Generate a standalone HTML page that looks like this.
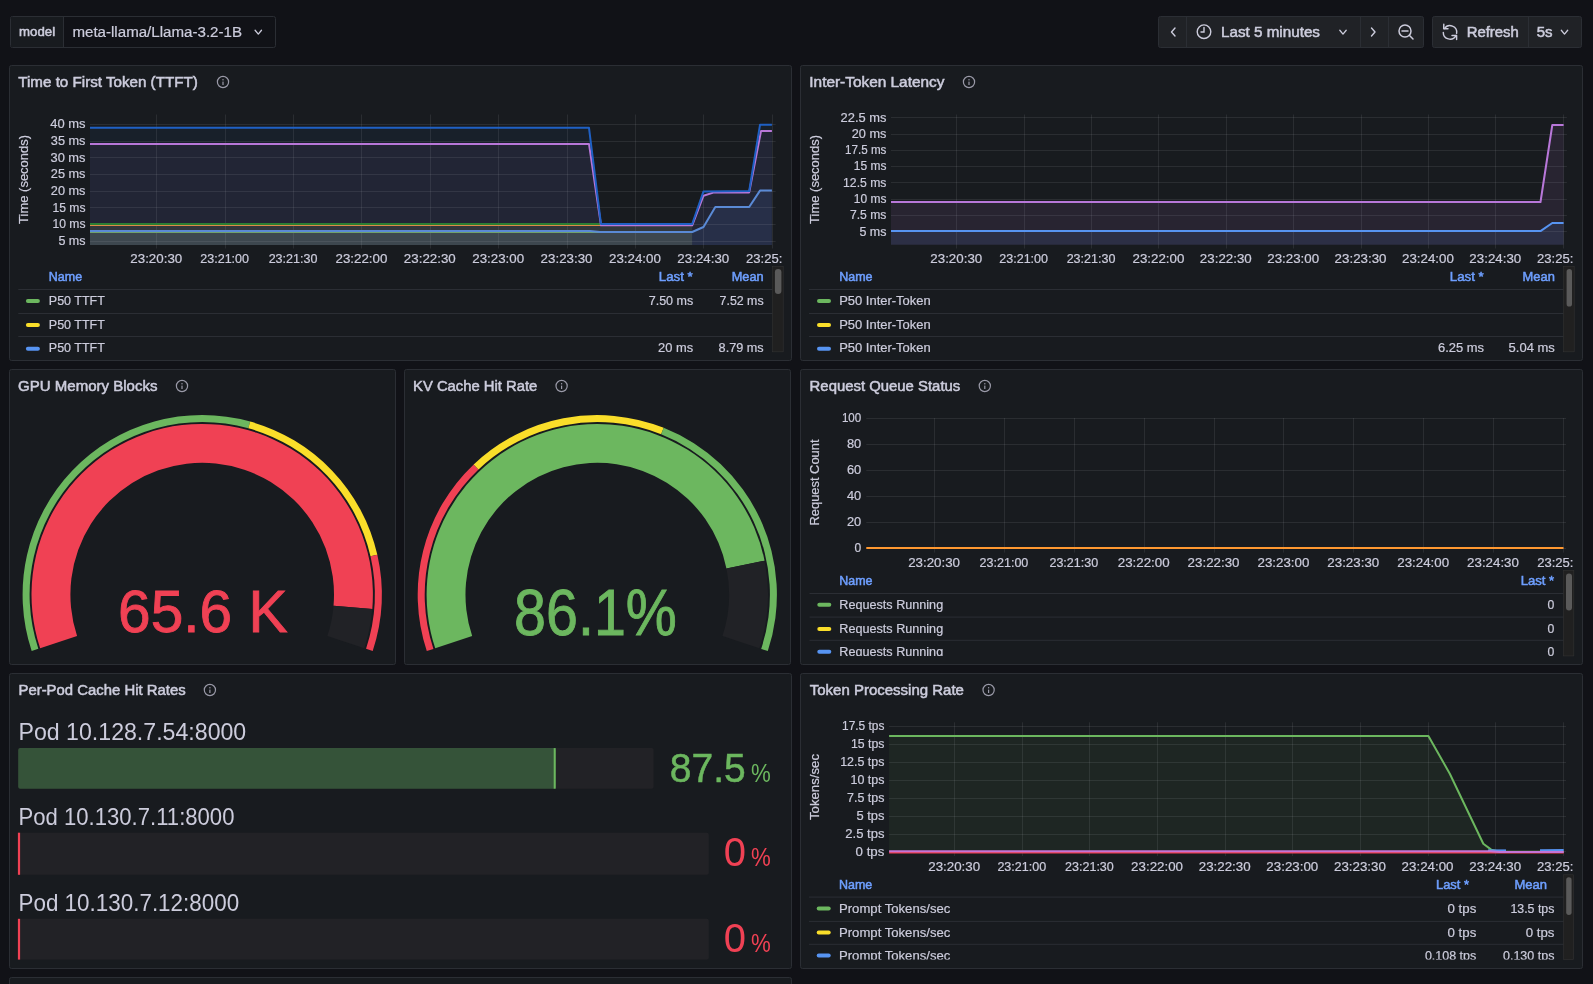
<!DOCTYPE html><html><head><meta charset="utf-8"><style>html,body{margin:0;padding:0;background:#111217;width:1593px;height:984px;overflow:hidden}svg{display:block;font-family:"Liberation Sans", sans-serif;will-change:transform}</style></head><body>
<svg width="1593" height="984" viewBox="0 0 1593 984">
<rect width="1593" height="984" fill="#111217"/>
<rect x="10.5" y="16.5" width="265" height="31" rx="2" fill="#111217" stroke="#2b2e34"/>
<rect x="11" y="17" width="52" height="30" fill="#181b1f"/>
<line x1="63.5" y1="17" x2="63.5" y2="47" stroke="#2b2e34" stroke-width="1"/>
<text x="19.10" y="36.00" font-size="12" fill="#ccccdc" stroke="#ccccdc" stroke-width="0.5" textLength="35.98" lengthAdjust="spacingAndGlyphs">model</text>
<text x="72.40" y="37.00" font-size="14" fill="#ccccdc" stroke="#ccccdc" stroke-width="0.2" textLength="169.63" lengthAdjust="spacingAndGlyphs">meta-llama/Llama-3.2-1B</text>
<path d="M255.10000000000002,30.28 L258.3,34.120000000000005 L261.5,30.28" fill="none" stroke="#ccccdc" stroke-width="1.3" stroke-linecap="round" stroke-linejoin="round"/>
<rect x="1158.5" y="16.5" width="265" height="31" rx="2" fill="#202226" stroke="#2b2e34"/>
<line x1="1186.5" y1="17" x2="1186.5" y2="47" stroke="#2b2e34" stroke-width="1"/>
<line x1="1360.5" y1="17" x2="1360.5" y2="47" stroke="#2b2e34" stroke-width="1"/>
<line x1="1388.5" y1="17" x2="1388.5" y2="47" stroke="#2b2e34" stroke-width="1"/>
<path d="M1175,28 L1171.5,32 L1175,36" fill="none" stroke="#ccccdc" stroke-width="1.4" stroke-linecap="round" stroke-linejoin="round"/>
<circle cx="1204" cy="31.7" r="6.8" fill="none" stroke="#ccccdc" stroke-width="1.4"/>
<path d="M1204,27.5 L1204,32 L1201,32" fill="none" stroke="#ccccdc" stroke-width="1.4" stroke-linecap="round"/>
<text x="1221.00" y="37.20" font-size="14" fill="#ccccdc" stroke="#ccccdc" stroke-width="0.5" textLength="98.98" lengthAdjust="spacingAndGlyphs">Last 5 minutes</text>
<path d="M1339.8,30.28 L1343,34.120000000000005 L1346.2,30.28" fill="none" stroke="#ccccdc" stroke-width="1.3" stroke-linecap="round" stroke-linejoin="round"/>
<path d="M1371.5,28 L1375,32 L1371.5,36" fill="none" stroke="#ccccdc" stroke-width="1.4" stroke-linecap="round" stroke-linejoin="round"/>
<circle cx="1405" cy="31" r="6" fill="none" stroke="#ccccdc" stroke-width="1.5"/>
<path d="M1402,31 L1408,31 M1409.3,35.3 L1413,39" fill="none" stroke="#ccccdc" stroke-width="1.5" stroke-linecap="round"/>
<rect x="1432.5" y="16.5" width="149" height="31" rx="2" fill="#202226" stroke="#2b2e34"/>
<line x1="1528.5" y1="17" x2="1528.5" y2="47" stroke="#2b2e34" stroke-width="1"/>
<path d="M1444.4,28.6 A6.7,6.7 0 0 1 1456.6,33.4 M1443.3,32.4 A6.7,6.7 0 0 0 1455.9,35.6" fill="none" stroke="#ccccdc" stroke-width="1.45" stroke-linecap="round"/>
<path d="M1443.8,24.3 L1443.7,28.7 L1448,28.7 M1452,35.5 L1456.6,35.5 L1456.6,39.6" fill="none" stroke="#ccccdc" stroke-width="1.45" stroke-linecap="round" stroke-linejoin="round"/>
<text x="1466.70" y="37.20" font-size="14" fill="#ccccdc" stroke="#ccccdc" stroke-width="0.5" textLength="52.12" lengthAdjust="spacingAndGlyphs">Refresh</text>
<text x="1536.70" y="37.20" font-size="14" fill="#ccccdc" stroke="#ccccdc" stroke-width="0.5" textLength="15.82" lengthAdjust="spacingAndGlyphs">5s</text>
<path d="M1561.3,30.28 L1564.5,34.120000000000005 L1567.7,30.28" fill="none" stroke="#ccccdc" stroke-width="1.3" stroke-linecap="round" stroke-linejoin="round"/>
<rect x="9.5" y="65.5" width="782" height="295" rx="2" fill="#181b1f" stroke="#2b2e34" stroke-width="1"/>
<rect x="800.5" y="65.5" width="782" height="295" rx="2" fill="#181b1f" stroke="#2b2e34" stroke-width="1"/>
<rect x="9.5" y="369.5" width="386" height="295" rx="2" fill="#181b1f" stroke="#2b2e34" stroke-width="1"/>
<rect x="404.5" y="369.5" width="386" height="295" rx="2" fill="#181b1f" stroke="#2b2e34" stroke-width="1"/>
<rect x="800.5" y="369.5" width="782" height="295" rx="2" fill="#181b1f" stroke="#2b2e34" stroke-width="1"/>
<rect x="9.5" y="673.5" width="782" height="295" rx="2" fill="#181b1f" stroke="#2b2e34" stroke-width="1"/>
<rect x="800.5" y="673.5" width="782" height="295" rx="2" fill="#181b1f" stroke="#2b2e34" stroke-width="1"/>
<rect x="9.5" y="977.5" width="782" height="39" rx="2" fill="#181b1f" stroke="#2b2e34" stroke-width="1"/>
<text x="18.30" y="87.00" font-size="14" fill="#ccccdc" stroke="#ccccdc" stroke-width="0.5" textLength="179.49" lengthAdjust="spacingAndGlyphs">Time to First Token (TTFT)</text>
<circle cx="223" cy="82" r="5.6" fill="none" stroke="#9a9aa8" stroke-width="1.2"/>
<rect x="222.4" y="81.6" width="1.2" height="3.4" fill="#9a9aa8"/>
<rect x="222.4" y="79.1" width="1.2" height="1.3" fill="#9a9aa8"/>
<text x="809.30" y="87.00" font-size="14" fill="#ccccdc" stroke="#ccccdc" stroke-width="0.5" textLength="135.17" lengthAdjust="spacingAndGlyphs">Inter-Token Latency</text>
<circle cx="969" cy="82" r="5.6" fill="none" stroke="#9a9aa8" stroke-width="1.2"/>
<rect x="968.4" y="81.6" width="1.2" height="3.4" fill="#9a9aa8"/>
<rect x="968.4" y="79.1" width="1.2" height="1.3" fill="#9a9aa8"/>
<text x="18.00" y="391.00" font-size="14" fill="#ccccdc" stroke="#ccccdc" stroke-width="0.5" textLength="139.49" lengthAdjust="spacingAndGlyphs">GPU Memory Blocks</text>
<circle cx="182" cy="386" r="5.6" fill="none" stroke="#9a9aa8" stroke-width="1.2"/>
<rect x="181.4" y="385.6" width="1.2" height="3.4" fill="#9a9aa8"/>
<rect x="181.4" y="383.1" width="1.2" height="1.3" fill="#9a9aa8"/>
<text x="413.00" y="391.00" font-size="14" fill="#ccccdc" stroke="#ccccdc" stroke-width="0.5" textLength="124.37" lengthAdjust="spacingAndGlyphs">KV Cache Hit Rate</text>
<circle cx="561.6" cy="386" r="5.6" fill="none" stroke="#9a9aa8" stroke-width="1.2"/>
<rect x="561.0" y="385.6" width="1.2" height="3.4" fill="#9a9aa8"/>
<rect x="561.0" y="383.1" width="1.2" height="1.3" fill="#9a9aa8"/>
<text x="809.60" y="391.00" font-size="14" fill="#ccccdc" stroke="#ccccdc" stroke-width="0.5" textLength="150.67" lengthAdjust="spacingAndGlyphs">Request Queue Status</text>
<circle cx="984.8" cy="386" r="5.6" fill="none" stroke="#9a9aa8" stroke-width="1.2"/>
<rect x="984.1999999999999" y="385.6" width="1.2" height="3.4" fill="#9a9aa8"/>
<rect x="984.1999999999999" y="383.1" width="1.2" height="1.3" fill="#9a9aa8"/>
<text x="18.50" y="695.00" font-size="14" fill="#ccccdc" stroke="#ccccdc" stroke-width="0.5" textLength="167.13" lengthAdjust="spacingAndGlyphs">Per-Pod Cache Hit Rates</text>
<circle cx="209.9" cy="690" r="5.6" fill="none" stroke="#9a9aa8" stroke-width="1.2"/>
<rect x="209.3" y="689.6" width="1.2" height="3.4" fill="#9a9aa8"/>
<rect x="209.3" y="687.1" width="1.2" height="1.3" fill="#9a9aa8"/>
<text x="809.70" y="695.00" font-size="14" fill="#ccccdc" stroke="#ccccdc" stroke-width="0.5" textLength="154.28" lengthAdjust="spacingAndGlyphs">Token Processing Rate</text>
<circle cx="988.6" cy="690" r="5.6" fill="none" stroke="#9a9aa8" stroke-width="1.2"/>
<rect x="988.0" y="689.6" width="1.2" height="3.4" fill="#9a9aa8"/>
<rect x="988.0" y="687.1" width="1.2" height="1.3" fill="#9a9aa8"/>
<text x="130.35" y="262.60" font-size="12" fill="#ccccdc" stroke="#ccccdc" stroke-width="0.2" textLength="51.87" lengthAdjust="spacingAndGlyphs">23:20:30</text>
<text x="200.28" y="262.60" font-size="12" fill="#ccccdc" stroke="#ccccdc" stroke-width="0.2" textLength="48.77" lengthAdjust="spacingAndGlyphs">23:21:00</text>
<text x="268.66" y="262.60" font-size="12" fill="#ccccdc" stroke="#ccccdc" stroke-width="0.2" textLength="48.77" lengthAdjust="spacingAndGlyphs">23:21:30</text>
<text x="335.48" y="262.60" font-size="12" fill="#ccccdc" stroke="#ccccdc" stroke-width="0.2" textLength="51.87" lengthAdjust="spacingAndGlyphs">23:22:00</text>
<text x="403.86" y="262.60" font-size="12" fill="#ccccdc" stroke="#ccccdc" stroke-width="0.2" textLength="51.87" lengthAdjust="spacingAndGlyphs">23:22:30</text>
<text x="472.24" y="262.60" font-size="12" fill="#ccccdc" stroke="#ccccdc" stroke-width="0.2" textLength="51.87" lengthAdjust="spacingAndGlyphs">23:23:00</text>
<text x="540.62" y="262.60" font-size="12" fill="#ccccdc" stroke="#ccccdc" stroke-width="0.2" textLength="51.87" lengthAdjust="spacingAndGlyphs">23:23:30</text>
<text x="608.99" y="262.60" font-size="12" fill="#ccccdc" stroke="#ccccdc" stroke-width="0.2" textLength="51.87" lengthAdjust="spacingAndGlyphs">23:24:00</text>
<text x="677.37" y="262.60" font-size="12" fill="#ccccdc" stroke="#ccccdc" stroke-width="0.2" textLength="51.87" lengthAdjust="spacingAndGlyphs">23:24:30</text>
<text x="746.00" y="262.60" font-size="12" fill="#ccccdc" stroke="#ccccdc" stroke-width="0.2" textLength="36.30" lengthAdjust="spacingAndGlyphs">23:25:</text>
<text x="50.20" y="128.20" font-size="12" fill="#ccccdc" stroke="#ccccdc" stroke-width="0.2" textLength="35.28" lengthAdjust="spacingAndGlyphs">40 ms</text>
<text x="50.80" y="144.88" font-size="12" fill="#ccccdc" stroke="#ccccdc" stroke-width="0.2" textLength="34.68" lengthAdjust="spacingAndGlyphs">35 ms</text>
<text x="50.50" y="161.56" font-size="12" fill="#ccccdc" stroke="#ccccdc" stroke-width="0.2" textLength="34.98" lengthAdjust="spacingAndGlyphs">30 ms</text>
<text x="50.80" y="178.24" font-size="12" fill="#ccccdc" stroke="#ccccdc" stroke-width="0.2" textLength="34.68" lengthAdjust="spacingAndGlyphs">25 ms</text>
<text x="50.80" y="194.92" font-size="12" fill="#ccccdc" stroke="#ccccdc" stroke-width="0.2" textLength="34.68" lengthAdjust="spacingAndGlyphs">20 ms</text>
<text x="52.50" y="211.60" font-size="12" fill="#ccccdc" stroke="#ccccdc" stroke-width="0.2" textLength="32.98" lengthAdjust="spacingAndGlyphs">15 ms</text>
<text x="52.50" y="228.28" font-size="12" fill="#ccccdc" stroke="#ccccdc" stroke-width="0.2" textLength="32.98" lengthAdjust="spacingAndGlyphs">10 ms</text>
<text x="58.40" y="244.96" font-size="12" fill="#ccccdc" stroke="#ccccdc" stroke-width="0.2" textLength="27.13" lengthAdjust="spacingAndGlyphs">5 ms</text>
<text x="0" y="0" font-size="12" fill="#ccccdc" stroke="#ccccdc" stroke-width="0.2" text-anchor="middle" textLength="89" lengthAdjust="spacingAndGlyphs" transform="translate(28.2,179.4) rotate(-90)">Time (seconds)</text>
<rect x="90" y="226" width="602.2" height="5" fill="#ccccdc" fill-opacity="0.05"/>
<rect x="90" y="231" width="602.2" height="14" fill="#f04154" fill-opacity="0.05"/>
<path d="M90.0,225.1 L692.2,225.1 L692.2,245 L90.0,245 Z" fill="#ff9830" fill-opacity="0.05" stroke="none"/>
<path d="M90.0,223.9 L692.2,223.9 L692.2,245 L90.0,245 Z" fill="#37872d" fill-opacity="0.09" stroke="none"/>
<path d="M90.0,232.0 L692.2,232.0 L692.2,245 L90.0,245 Z" fill="#6cb75f" fill-opacity="0.11" stroke="none"/>
<path d="M90.0,231.0 L590.0,231.0 L600.0,232.0 L692.2,232.0 L703.5,227.0 L715.3,207.0 L749.2,207.0 L760.0,190.6 L771.9,190.6 L771.9,245 L90.0,245 Z" fill="#5794f2" fill-opacity="0.1" stroke="none"/>
<path d="M90.0,143.9 L589.0,143.9 L601.0,225.3 L692.2,225.3 L703.5,195.7 L714.0,192.4 L749.2,192.4 L761.0,131.1 L771.9,131.1 L771.9,245 L90.0,245 Z" fill="#b877d9" fill-opacity="0.07" stroke="none"/>
<path d="M90.0,127.8 L589.0,127.8 L601.0,224.0 L692.2,224.0 L703.5,191.4 L749.2,191.0 L760.0,124.8 L771.9,124.8 L771.9,245 L90.0,245 Z" fill="#1f60c4" fill-opacity="0.07" stroke="none"/>
<line x1="90" y1="124.5" x2="775.6" y2="124.5" stroke="rgba(204,204,220,0.1)" stroke-width="1"/>
<line x1="90" y1="141.5" x2="775.6" y2="141.5" stroke="rgba(204,204,220,0.1)" stroke-width="1"/>
<line x1="90" y1="157.5" x2="775.6" y2="157.5" stroke="rgba(204,204,220,0.1)" stroke-width="1"/>
<line x1="90" y1="174.5" x2="775.6" y2="174.5" stroke="rgba(204,204,220,0.1)" stroke-width="1"/>
<line x1="90" y1="191.5" x2="775.6" y2="191.5" stroke="rgba(204,204,220,0.1)" stroke-width="1"/>
<line x1="90" y1="207.5" x2="775.6" y2="207.5" stroke="rgba(204,204,220,0.1)" stroke-width="1"/>
<line x1="90" y1="224.5" x2="775.6" y2="224.5" stroke="rgba(204,204,220,0.1)" stroke-width="1"/>
<line x1="90" y1="241.5" x2="775.6" y2="241.5" stroke="rgba(204,204,220,0.1)" stroke-width="1"/>
<line x1="156.5" y1="114.5" x2="156.5" y2="248.5" stroke="rgba(204,204,220,0.1)" stroke-width="1"/>
<line x1="225.5" y1="114.5" x2="225.5" y2="248.5" stroke="rgba(204,204,220,0.1)" stroke-width="1"/>
<line x1="293.5" y1="114.5" x2="293.5" y2="248.5" stroke="rgba(204,204,220,0.1)" stroke-width="1"/>
<line x1="361.5" y1="114.5" x2="361.5" y2="248.5" stroke="rgba(204,204,220,0.1)" stroke-width="1"/>
<line x1="430.5" y1="114.5" x2="430.5" y2="248.5" stroke="rgba(204,204,220,0.1)" stroke-width="1"/>
<line x1="498.5" y1="114.5" x2="498.5" y2="248.5" stroke="rgba(204,204,220,0.1)" stroke-width="1"/>
<line x1="567.5" y1="114.5" x2="567.5" y2="248.5" stroke="rgba(204,204,220,0.1)" stroke-width="1"/>
<line x1="635.5" y1="114.5" x2="635.5" y2="248.5" stroke="rgba(204,204,220,0.1)" stroke-width="1"/>
<line x1="703.5" y1="114.5" x2="703.5" y2="248.5" stroke="rgba(204,204,220,0.1)" stroke-width="1"/>
<line x1="772.5" y1="114.5" x2="772.5" y2="248.5" stroke="rgba(204,204,220,0.1)" stroke-width="1"/>
<path d="M90.0,225.1 L692.2,225.1" fill="none" stroke="#dd8a48" stroke-width="2" stroke-linejoin="round"/>
<path d="M90.0,223.9 L692.2,223.9" fill="none" stroke="#2c7f34" stroke-width="2" stroke-linejoin="round"/>
<path d="M90.0,232.0 L692.2,232.0" fill="none" stroke="#70a26c" stroke-width="2" stroke-linejoin="round"/>
<path d="M90.0,231.0 L590.0,231.0 L600.0,232.0 L692.2,232.0 L703.5,227.0 L715.3,207.0 L749.2,207.0 L760.0,190.6 L771.9,190.6" fill="none" stroke="#5a8ad6" stroke-width="2" stroke-linejoin="round"/>
<path d="M90.0,143.9 L589.0,143.9 L601.0,225.3 L692.2,225.3 L703.5,195.7 L714.0,192.4 L749.2,192.4 L761.0,131.1 L771.9,131.1" fill="none" stroke="#b877d9" stroke-width="2" stroke-linejoin="round"/>
<path d="M90.0,127.8 L589.0,127.8 L601.0,224.0 L692.2,224.0 L703.5,191.4 L749.2,191.0 L760.0,124.8 L771.9,124.8" fill="none" stroke="#1f60c4" stroke-width="2" stroke-linejoin="round"/>
<text x="48.80" y="281.00" font-size="12" fill="#6e9fff" stroke="#6e9fff" stroke-width="0.5" textLength="33.27" lengthAdjust="spacingAndGlyphs">Name</text>
<text x="658.80" y="281.00" font-size="12" fill="#6e9fff" stroke="#6e9fff" stroke-width="0.5" textLength="33.93" lengthAdjust="spacingAndGlyphs">Last *</text>
<text x="731.70" y="281.00" font-size="12" fill="#6e9fff" stroke="#6e9fff" stroke-width="0.5" textLength="31.92" lengthAdjust="spacingAndGlyphs">Mean</text>
<line x1="18.3" y1="289.5" x2="772.6" y2="289.5" stroke="#2b2e34" stroke-width="1"/>
<line x1="18.3" y1="313.5" x2="772.6" y2="313.5" stroke="#2b2e34" stroke-width="1"/>
<line x1="18.3" y1="336.5" x2="772.6" y2="336.5" stroke="#2b2e34" stroke-width="1"/>
<rect x="25.9" y="299" width="14" height="4" rx="2" fill="#6cb75f"/>
<rect x="25.9" y="323" width="14" height="4" rx="2" fill="#fade2a"/>
<rect x="25.9" y="346.7" width="14" height="4" rx="2" fill="#5794f2"/>
<text x="48.80" y="304.80" font-size="12" fill="#ccccdc" stroke="#ccccdc" stroke-width="0.2" textLength="56.07" lengthAdjust="spacingAndGlyphs">P50 TTFT</text>
<text x="48.80" y="328.90" font-size="12" fill="#ccccdc" stroke="#ccccdc" stroke-width="0.2" textLength="56.07" lengthAdjust="spacingAndGlyphs">P50 TTFT</text>
<text x="48.80" y="352.00" font-size="12" fill="#ccccdc" stroke="#ccccdc" stroke-width="0.2" textLength="56.07" lengthAdjust="spacingAndGlyphs">P50 TTFT</text>
<text x="648.70" y="304.80" font-size="12" fill="#ccccdc" stroke="#ccccdc" stroke-width="0.2" textLength="44.53" lengthAdjust="spacingAndGlyphs">7.50 ms</text>
<text x="719.60" y="304.80" font-size="12" fill="#ccccdc" stroke="#ccccdc" stroke-width="0.2" textLength="44.03" lengthAdjust="spacingAndGlyphs">7.52 ms</text>
<text x="658.00" y="352.00" font-size="12" fill="#ccccdc" stroke="#ccccdc" stroke-width="0.2" textLength="35.08" lengthAdjust="spacingAndGlyphs">20 ms</text>
<text x="718.60" y="352.00" font-size="12" fill="#ccccdc" stroke="#ccccdc" stroke-width="0.2" textLength="45.03" lengthAdjust="spacingAndGlyphs">8.79 ms</text>
<rect x="772.6" y="266.4" width="10.600000000000023" height="85.40000000000003" fill="#202020" stroke="#333" stroke-width="0.6"/>
<rect x="774.9" y="268.9" width="6.5" height="25.100000000000023" rx="3.25" fill="#5a5a5a"/>
<text x="930.35" y="262.60" font-size="12" fill="#ccccdc" stroke="#ccccdc" stroke-width="0.2" textLength="51.87" lengthAdjust="spacingAndGlyphs">23:20:30</text>
<text x="999.28" y="262.60" font-size="12" fill="#ccccdc" stroke="#ccccdc" stroke-width="0.2" textLength="48.77" lengthAdjust="spacingAndGlyphs">23:21:00</text>
<text x="1066.66" y="262.60" font-size="12" fill="#ccccdc" stroke="#ccccdc" stroke-width="0.2" textLength="48.77" lengthAdjust="spacingAndGlyphs">23:21:30</text>
<text x="1132.48" y="262.60" font-size="12" fill="#ccccdc" stroke="#ccccdc" stroke-width="0.2" textLength="51.87" lengthAdjust="spacingAndGlyphs">23:22:00</text>
<text x="1199.86" y="262.60" font-size="12" fill="#ccccdc" stroke="#ccccdc" stroke-width="0.2" textLength="51.87" lengthAdjust="spacingAndGlyphs">23:22:30</text>
<text x="1267.24" y="262.60" font-size="12" fill="#ccccdc" stroke="#ccccdc" stroke-width="0.2" textLength="51.87" lengthAdjust="spacingAndGlyphs">23:23:00</text>
<text x="1334.62" y="262.60" font-size="12" fill="#ccccdc" stroke="#ccccdc" stroke-width="0.2" textLength="51.87" lengthAdjust="spacingAndGlyphs">23:23:30</text>
<text x="1401.99" y="262.60" font-size="12" fill="#ccccdc" stroke="#ccccdc" stroke-width="0.2" textLength="51.87" lengthAdjust="spacingAndGlyphs">23:24:00</text>
<text x="1469.37" y="262.60" font-size="12" fill="#ccccdc" stroke="#ccccdc" stroke-width="0.2" textLength="51.87" lengthAdjust="spacingAndGlyphs">23:24:30</text>
<text x="1537.00" y="262.60" font-size="12" fill="#ccccdc" stroke="#ccccdc" stroke-width="0.2" textLength="36.30" lengthAdjust="spacingAndGlyphs">23:25:</text>
<text x="840.60" y="121.60" font-size="12" fill="#ccccdc" stroke="#ccccdc" stroke-width="0.2" textLength="45.83" lengthAdjust="spacingAndGlyphs">22.5 ms</text>
<text x="851.80" y="137.88" font-size="12" fill="#ccccdc" stroke="#ccccdc" stroke-width="0.2" textLength="34.58" lengthAdjust="spacingAndGlyphs">20 ms</text>
<text x="845.10" y="154.16" font-size="12" fill="#ccccdc" stroke="#ccccdc" stroke-width="0.2" textLength="41.33" lengthAdjust="spacingAndGlyphs">17.5 ms</text>
<text x="853.80" y="170.44" font-size="12" fill="#ccccdc" stroke="#ccccdc" stroke-width="0.2" textLength="32.58" lengthAdjust="spacingAndGlyphs">15 ms</text>
<text x="843.10" y="186.72" font-size="12" fill="#ccccdc" stroke="#ccccdc" stroke-width="0.2" textLength="43.33" lengthAdjust="spacingAndGlyphs">12.5 ms</text>
<text x="853.80" y="203.00" font-size="12" fill="#ccccdc" stroke="#ccccdc" stroke-width="0.2" textLength="32.58" lengthAdjust="spacingAndGlyphs">10 ms</text>
<text x="850.00" y="219.28" font-size="12" fill="#ccccdc" stroke="#ccccdc" stroke-width="0.2" textLength="36.41" lengthAdjust="spacingAndGlyphs">7.5 ms</text>
<text x="859.40" y="235.56" font-size="12" fill="#ccccdc" stroke="#ccccdc" stroke-width="0.2" textLength="27.03" lengthAdjust="spacingAndGlyphs">5 ms</text>
<text x="0" y="0" font-size="12" fill="#ccccdc" stroke="#ccccdc" stroke-width="0.2" text-anchor="middle" textLength="89" lengthAdjust="spacingAndGlyphs" transform="translate(819.2,179.4) rotate(-90)">Time (seconds)</text>
<path d="M891.0,202.0 L1540.5,202.0 L1552.3,125.0 L1563.6,125.0 L1563.6,244.7 L891.0,244.7 Z" fill="#b877d9" fill-opacity="0.1" stroke="none"/>
<path d="M891.0,231.1 L1540.5,231.1 L1552.3,223.0 L1563.6,223.0 L1563.6,244.7 L891.0,244.7 Z" fill="#5794f2" fill-opacity="0.1" stroke="none"/>
<line x1="891" y1="117.5" x2="1566.9" y2="117.5" stroke="rgba(204,204,220,0.1)" stroke-width="1"/>
<line x1="891" y1="134.5" x2="1566.9" y2="134.5" stroke="rgba(204,204,220,0.1)" stroke-width="1"/>
<line x1="891" y1="150.5" x2="1566.9" y2="150.5" stroke="rgba(204,204,220,0.1)" stroke-width="1"/>
<line x1="891" y1="166.5" x2="1566.9" y2="166.5" stroke="rgba(204,204,220,0.1)" stroke-width="1"/>
<line x1="891" y1="182.5" x2="1566.9" y2="182.5" stroke="rgba(204,204,220,0.1)" stroke-width="1"/>
<line x1="891" y1="199.5" x2="1566.9" y2="199.5" stroke="rgba(204,204,220,0.1)" stroke-width="1"/>
<line x1="891" y1="215.5" x2="1566.9" y2="215.5" stroke="rgba(204,204,220,0.1)" stroke-width="1"/>
<line x1="891" y1="231.5" x2="1566.9" y2="231.5" stroke="rgba(204,204,220,0.1)" stroke-width="1"/>
<line x1="956.5" y1="114.5" x2="956.5" y2="248.5" stroke="rgba(204,204,220,0.1)" stroke-width="1"/>
<line x1="1024.5" y1="114.5" x2="1024.5" y2="248.5" stroke="rgba(204,204,220,0.1)" stroke-width="1"/>
<line x1="1091.5" y1="114.5" x2="1091.5" y2="248.5" stroke="rgba(204,204,220,0.1)" stroke-width="1"/>
<line x1="1158.5" y1="114.5" x2="1158.5" y2="248.5" stroke="rgba(204,204,220,0.1)" stroke-width="1"/>
<line x1="1226.5" y1="114.5" x2="1226.5" y2="248.5" stroke="rgba(204,204,220,0.1)" stroke-width="1"/>
<line x1="1293.5" y1="114.5" x2="1293.5" y2="248.5" stroke="rgba(204,204,220,0.1)" stroke-width="1"/>
<line x1="1361.5" y1="114.5" x2="1361.5" y2="248.5" stroke="rgba(204,204,220,0.1)" stroke-width="1"/>
<line x1="1428.5" y1="114.5" x2="1428.5" y2="248.5" stroke="rgba(204,204,220,0.1)" stroke-width="1"/>
<line x1="1495.5" y1="114.5" x2="1495.5" y2="248.5" stroke="rgba(204,204,220,0.1)" stroke-width="1"/>
<line x1="1563.5" y1="114.5" x2="1563.5" y2="248.5" stroke="rgba(204,204,220,0.1)" stroke-width="1"/>
<path d="M891.0,202.0 L1540.5,202.0 L1552.3,125.0 L1563.6,125.0" fill="none" stroke="#b877d9" stroke-width="2" stroke-linejoin="round"/>
<path d="M891.0,231.1 L1540.5,231.1 L1552.3,223.0 L1563.6,223.0" fill="none" stroke="#5794f2" stroke-width="2" stroke-linejoin="round"/>
<text x="839.20" y="281.00" font-size="12" fill="#6e9fff" stroke="#6e9fff" stroke-width="0.5" textLength="33.27" lengthAdjust="spacingAndGlyphs">Name</text>
<text x="1449.80" y="281.00" font-size="12" fill="#6e9fff" stroke="#6e9fff" stroke-width="0.5" textLength="33.93" lengthAdjust="spacingAndGlyphs">Last *</text>
<text x="1522.60" y="281.00" font-size="12" fill="#6e9fff" stroke="#6e9fff" stroke-width="0.5" textLength="32.22" lengthAdjust="spacingAndGlyphs">Mean</text>
<line x1="809" y1="289.5" x2="1563.6" y2="289.5" stroke="#2b2e34" stroke-width="1"/>
<line x1="809" y1="313.5" x2="1563.6" y2="313.5" stroke="#2b2e34" stroke-width="1"/>
<line x1="809" y1="336.5" x2="1563.6" y2="336.5" stroke="#2b2e34" stroke-width="1"/>
<rect x="817" y="299" width="14" height="4" rx="2" fill="#6cb75f"/>
<rect x="817" y="323" width="14" height="4" rx="2" fill="#fade2a"/>
<rect x="817" y="346.7" width="14" height="4" rx="2" fill="#5794f2"/>
<text x="839.20" y="304.80" font-size="12" fill="#ccccdc" stroke="#ccccdc" stroke-width="0.2" textLength="91.50" lengthAdjust="spacingAndGlyphs">P50 Inter-Token</text>
<text x="839.20" y="328.90" font-size="12" fill="#ccccdc" stroke="#ccccdc" stroke-width="0.2" textLength="91.50" lengthAdjust="spacingAndGlyphs">P50 Inter-Token</text>
<text x="839.20" y="352.00" font-size="12" fill="#ccccdc" stroke="#ccccdc" stroke-width="0.2" textLength="91.50" lengthAdjust="spacingAndGlyphs">P50 Inter-Token</text>
<text x="1438.00" y="352.00" font-size="12" fill="#ccccdc" stroke="#ccccdc" stroke-width="0.2" textLength="46.03" lengthAdjust="spacingAndGlyphs">6.25 ms</text>
<text x="1508.60" y="352.00" font-size="12" fill="#ccccdc" stroke="#ccccdc" stroke-width="0.2" textLength="46.23" lengthAdjust="spacingAndGlyphs">5.04 ms</text>
<rect x="1563.6" y="266.4" width="10.600000000000136" height="85.40000000000003" fill="#202020" stroke="#333" stroke-width="0.6"/>
<rect x="1566.6" y="269" width="5.400000000000091" height="37.60000000000002" rx="2.7000000000000455" fill="#5a5a5a"/>
<text x="908.15" y="566.80" font-size="12" fill="#ccccdc" stroke="#ccccdc" stroke-width="0.2" textLength="51.87" lengthAdjust="spacingAndGlyphs">23:20:30</text>
<text x="979.57" y="566.80" font-size="12" fill="#ccccdc" stroke="#ccccdc" stroke-width="0.2" textLength="48.77" lengthAdjust="spacingAndGlyphs">23:21:00</text>
<text x="1049.43" y="566.80" font-size="12" fill="#ccccdc" stroke="#ccccdc" stroke-width="0.2" textLength="48.77" lengthAdjust="spacingAndGlyphs">23:21:30</text>
<text x="1117.75" y="566.80" font-size="12" fill="#ccccdc" stroke="#ccccdc" stroke-width="0.2" textLength="51.87" lengthAdjust="spacingAndGlyphs">23:22:00</text>
<text x="1187.62" y="566.80" font-size="12" fill="#ccccdc" stroke="#ccccdc" stroke-width="0.2" textLength="51.87" lengthAdjust="spacingAndGlyphs">23:22:30</text>
<text x="1257.48" y="566.80" font-size="12" fill="#ccccdc" stroke="#ccccdc" stroke-width="0.2" textLength="51.87" lengthAdjust="spacingAndGlyphs">23:23:00</text>
<text x="1327.35" y="566.80" font-size="12" fill="#ccccdc" stroke="#ccccdc" stroke-width="0.2" textLength="51.87" lengthAdjust="spacingAndGlyphs">23:23:30</text>
<text x="1397.22" y="566.80" font-size="12" fill="#ccccdc" stroke="#ccccdc" stroke-width="0.2" textLength="51.87" lengthAdjust="spacingAndGlyphs">23:24:00</text>
<text x="1467.08" y="566.80" font-size="12" fill="#ccccdc" stroke="#ccccdc" stroke-width="0.2" textLength="51.87" lengthAdjust="spacingAndGlyphs">23:24:30</text>
<text x="1537.20" y="566.80" font-size="12" fill="#ccccdc" stroke="#ccccdc" stroke-width="0.2" textLength="36.30" lengthAdjust="spacingAndGlyphs">23:25:</text>
<text x="841.90" y="422.10" font-size="12" fill="#ccccdc" stroke="#ccccdc" stroke-width="0.2" textLength="19.28" lengthAdjust="spacingAndGlyphs">100</text>
<text x="846.90" y="448.04" font-size="12" fill="#ccccdc" stroke="#ccccdc" stroke-width="0.2" textLength="14.33" lengthAdjust="spacingAndGlyphs">80</text>
<text x="846.90" y="473.98" font-size="12" fill="#ccccdc" stroke="#ccccdc" stroke-width="0.2" textLength="14.33" lengthAdjust="spacingAndGlyphs">60</text>
<text x="846.90" y="499.92" font-size="12" fill="#ccccdc" stroke="#ccccdc" stroke-width="0.2" textLength="14.33" lengthAdjust="spacingAndGlyphs">40</text>
<text x="846.90" y="525.86" font-size="12" fill="#ccccdc" stroke="#ccccdc" stroke-width="0.2" textLength="14.33" lengthAdjust="spacingAndGlyphs">20</text>
<text x="854.50" y="551.80" font-size="12" fill="#ccccdc" stroke="#ccccdc" stroke-width="0.2" textLength="6.71" lengthAdjust="spacingAndGlyphs">0</text>
<text x="0" y="0" font-size="12" fill="#ccccdc" stroke="#ccccdc" stroke-width="0.2" text-anchor="middle" textLength="86" lengthAdjust="spacingAndGlyphs" transform="translate(819.2,482.5) rotate(-90)">Request Count</text>
<line x1="866.3" y1="418.5" x2="1566" y2="418.5" stroke="rgba(204,204,220,0.1)" stroke-width="1"/>
<line x1="866.3" y1="444.5" x2="1566" y2="444.5" stroke="rgba(204,204,220,0.1)" stroke-width="1"/>
<line x1="866.3" y1="470.5" x2="1566" y2="470.5" stroke="rgba(204,204,220,0.1)" stroke-width="1"/>
<line x1="866.3" y1="496.5" x2="1566" y2="496.5" stroke="rgba(204,204,220,0.1)" stroke-width="1"/>
<line x1="866.3" y1="522.5" x2="1566" y2="522.5" stroke="rgba(204,204,220,0.1)" stroke-width="1"/>
<line x1="866.3" y1="548.5" x2="1566" y2="548.5" stroke="rgba(204,204,220,0.1)" stroke-width="1"/>
<line x1="934.5" y1="418" x2="934.5" y2="552.6" stroke="rgba(204,204,220,0.1)" stroke-width="1"/>
<line x1="1004.5" y1="418" x2="1004.5" y2="552.6" stroke="rgba(204,204,220,0.1)" stroke-width="1"/>
<line x1="1074.5" y1="418" x2="1074.5" y2="552.6" stroke="rgba(204,204,220,0.1)" stroke-width="1"/>
<line x1="1144.5" y1="418" x2="1144.5" y2="552.6" stroke="rgba(204,204,220,0.1)" stroke-width="1"/>
<line x1="1214.5" y1="418" x2="1214.5" y2="552.6" stroke="rgba(204,204,220,0.1)" stroke-width="1"/>
<line x1="1283.5" y1="418" x2="1283.5" y2="552.6" stroke="rgba(204,204,220,0.1)" stroke-width="1"/>
<line x1="1353.5" y1="418" x2="1353.5" y2="552.6" stroke="rgba(204,204,220,0.1)" stroke-width="1"/>
<line x1="1423.5" y1="418" x2="1423.5" y2="552.6" stroke="rgba(204,204,220,0.1)" stroke-width="1"/>
<line x1="1493.5" y1="418" x2="1493.5" y2="552.6" stroke="rgba(204,204,220,0.1)" stroke-width="1"/>
<line x1="1563.5" y1="418" x2="1563.5" y2="552.6" stroke="rgba(204,204,220,0.1)" stroke-width="1"/>
<path d="M866.3,548.0 L1563.5,548.0" fill="none" stroke="#ff9830" stroke-width="2" stroke-linejoin="round"/>
<text x="839.30" y="585.00" font-size="12" fill="#6e9fff" stroke="#6e9fff" stroke-width="0.5" textLength="33.17" lengthAdjust="spacingAndGlyphs">Name</text>
<text x="1520.70" y="585.00" font-size="12" fill="#6e9fff" stroke="#6e9fff" stroke-width="0.5" textLength="33.53" lengthAdjust="spacingAndGlyphs">Last *</text>
<line x1="809.5" y1="593.5" x2="1563.5" y2="593.5" stroke="#2b2e34" stroke-width="1"/>
<line x1="809.5" y1="617.1" x2="1563.5" y2="617.1" stroke="#2b2e34" stroke-width="1"/>
<line x1="809.5" y1="640.3" x2="1563.5" y2="640.3" stroke="#2b2e34" stroke-width="1"/>
<clipPath id="c5"><rect x="800" y="560" width="780" height="95.9"/></clipPath><g clip-path="url(#c5)">
<rect x="817.3" y="602.7" width="14" height="4" rx="2" fill="#6cb75f"/>
<rect x="817.3" y="626.9" width="14" height="4" rx="2" fill="#fade2a"/>
<rect x="817.3" y="649.8" width="14" height="4" rx="2" fill="#5794f2"/>
<text x="839.30" y="609.00" font-size="12" fill="#ccccdc" stroke="#ccccdc" stroke-width="0.2" textLength="103.87" lengthAdjust="spacingAndGlyphs">Requests Running</text>
<text x="1547.40" y="609.00" font-size="12" fill="#ccccdc" stroke="#ccccdc" stroke-width="0.2" textLength="6.81" lengthAdjust="spacingAndGlyphs">0</text>
<text x="839.30" y="633.00" font-size="12" fill="#ccccdc" stroke="#ccccdc" stroke-width="0.2" textLength="103.87" lengthAdjust="spacingAndGlyphs">Requests Running</text>
<text x="1547.40" y="633.00" font-size="12" fill="#ccccdc" stroke="#ccccdc" stroke-width="0.2" textLength="6.81" lengthAdjust="spacingAndGlyphs">0</text>
<text x="839.30" y="656.00" font-size="12" fill="#ccccdc" stroke="#ccccdc" stroke-width="0.2" textLength="103.87" lengthAdjust="spacingAndGlyphs">Requests Running</text>
<text x="1547.40" y="656.00" font-size="12" fill="#ccccdc" stroke="#ccccdc" stroke-width="0.2" textLength="6.81" lengthAdjust="spacingAndGlyphs">0</text>
</g>
<rect x="1563.5" y="570.3" width="10.299999999999955" height="85.60000000000002" fill="#202020" stroke="#333" stroke-width="0.6"/>
<rect x="1566" y="573.4" width="6" height="37.200000000000045" rx="3.0" fill="#5a5a5a"/>
<text x="928.25" y="871.00" font-size="12" fill="#ccccdc" stroke="#ccccdc" stroke-width="0.2" textLength="51.87" lengthAdjust="spacingAndGlyphs">23:20:30</text>
<text x="997.42" y="871.00" font-size="12" fill="#ccccdc" stroke="#ccccdc" stroke-width="0.2" textLength="48.77" lengthAdjust="spacingAndGlyphs">23:21:00</text>
<text x="1065.04" y="871.00" font-size="12" fill="#ccccdc" stroke="#ccccdc" stroke-width="0.2" textLength="48.77" lengthAdjust="spacingAndGlyphs">23:21:30</text>
<text x="1131.12" y="871.00" font-size="12" fill="#ccccdc" stroke="#ccccdc" stroke-width="0.2" textLength="51.87" lengthAdjust="spacingAndGlyphs">23:22:00</text>
<text x="1198.74" y="871.00" font-size="12" fill="#ccccdc" stroke="#ccccdc" stroke-width="0.2" textLength="51.87" lengthAdjust="spacingAndGlyphs">23:22:30</text>
<text x="1266.36" y="871.00" font-size="12" fill="#ccccdc" stroke="#ccccdc" stroke-width="0.2" textLength="51.87" lengthAdjust="spacingAndGlyphs">23:23:00</text>
<text x="1333.98" y="871.00" font-size="12" fill="#ccccdc" stroke="#ccccdc" stroke-width="0.2" textLength="51.87" lengthAdjust="spacingAndGlyphs">23:23:30</text>
<text x="1401.61" y="871.00" font-size="12" fill="#ccccdc" stroke="#ccccdc" stroke-width="0.2" textLength="51.87" lengthAdjust="spacingAndGlyphs">23:24:00</text>
<text x="1469.23" y="871.00" font-size="12" fill="#ccccdc" stroke="#ccccdc" stroke-width="0.2" textLength="51.87" lengthAdjust="spacingAndGlyphs">23:24:30</text>
<text x="1537.10" y="871.00" font-size="12" fill="#ccccdc" stroke="#ccccdc" stroke-width="0.2" textLength="36.30" lengthAdjust="spacingAndGlyphs">23:25:</text>
<text x="842.10" y="730.40" font-size="12" fill="#ccccdc" stroke="#ccccdc" stroke-width="0.2" textLength="42.28" lengthAdjust="spacingAndGlyphs">17.5 tps</text>
<text x="850.90" y="748.31" font-size="12" fill="#ccccdc" stroke="#ccccdc" stroke-width="0.2" textLength="33.49" lengthAdjust="spacingAndGlyphs">15 tps</text>
<text x="840.20" y="766.22" font-size="12" fill="#ccccdc" stroke="#ccccdc" stroke-width="0.2" textLength="44.18" lengthAdjust="spacingAndGlyphs">12.5 tps</text>
<text x="850.50" y="784.13" font-size="12" fill="#ccccdc" stroke="#ccccdc" stroke-width="0.2" textLength="33.89" lengthAdjust="spacingAndGlyphs">10 tps</text>
<text x="847.10" y="802.04" font-size="12" fill="#ccccdc" stroke="#ccccdc" stroke-width="0.2" textLength="37.32" lengthAdjust="spacingAndGlyphs">7.5 tps</text>
<text x="856.40" y="819.95" font-size="12" fill="#ccccdc" stroke="#ccccdc" stroke-width="0.2" textLength="27.97" lengthAdjust="spacingAndGlyphs">5 tps</text>
<text x="845.30" y="837.86" font-size="12" fill="#ccccdc" stroke="#ccccdc" stroke-width="0.2" textLength="39.13" lengthAdjust="spacingAndGlyphs">2.5 tps</text>
<text x="855.60" y="855.77" font-size="12" fill="#ccccdc" stroke="#ccccdc" stroke-width="0.2" textLength="28.77" lengthAdjust="spacingAndGlyphs">0 tps</text>
<text x="0" y="0" font-size="12" fill="#ccccdc" stroke="#ccccdc" stroke-width="0.2" text-anchor="middle" textLength="66" lengthAdjust="spacingAndGlyphs" transform="translate(819.2,787) rotate(-90)">Tokens/sec</text>
<path d="M889.1,736.0 L1428.4,736.0 L1449.8,773.7 L1483.3,843.8 L1491.2,849.6 L1500.0,851.8 L1563.7,851.8 L1563.7,852 L889.1,852 Z" fill="#6cb75f" fill-opacity="0.08" stroke="none"/>
<line x1="889.1" y1="726.5" x2="1566" y2="726.5" stroke="rgba(204,204,220,0.1)" stroke-width="1"/>
<line x1="889.1" y1="744.5" x2="1566" y2="744.5" stroke="rgba(204,204,220,0.1)" stroke-width="1"/>
<line x1="889.1" y1="762.5" x2="1566" y2="762.5" stroke="rgba(204,204,220,0.1)" stroke-width="1"/>
<line x1="889.1" y1="780.5" x2="1566" y2="780.5" stroke="rgba(204,204,220,0.1)" stroke-width="1"/>
<line x1="889.1" y1="798.5" x2="1566" y2="798.5" stroke="rgba(204,204,220,0.1)" stroke-width="1"/>
<line x1="889.1" y1="816.5" x2="1566" y2="816.5" stroke="rgba(204,204,220,0.1)" stroke-width="1"/>
<line x1="889.1" y1="834.5" x2="1566" y2="834.5" stroke="rgba(204,204,220,0.1)" stroke-width="1"/>
<line x1="889.1" y1="851.5" x2="1566" y2="851.5" stroke="rgba(204,204,220,0.1)" stroke-width="1"/>
<line x1="954.5" y1="722.3" x2="954.5" y2="856" stroke="rgba(204,204,220,0.1)" stroke-width="1"/>
<line x1="1022.5" y1="722.3" x2="1022.5" y2="856" stroke="rgba(204,204,220,0.1)" stroke-width="1"/>
<line x1="1089.5" y1="722.3" x2="1089.5" y2="856" stroke="rgba(204,204,220,0.1)" stroke-width="1"/>
<line x1="1157.5" y1="722.3" x2="1157.5" y2="856" stroke="rgba(204,204,220,0.1)" stroke-width="1"/>
<line x1="1225.5" y1="722.3" x2="1225.5" y2="856" stroke="rgba(204,204,220,0.1)" stroke-width="1"/>
<line x1="1292.5" y1="722.3" x2="1292.5" y2="856" stroke="rgba(204,204,220,0.1)" stroke-width="1"/>
<line x1="1360.5" y1="722.3" x2="1360.5" y2="856" stroke="rgba(204,204,220,0.1)" stroke-width="1"/>
<line x1="1428.5" y1="722.3" x2="1428.5" y2="856" stroke="rgba(204,204,220,0.1)" stroke-width="1"/>
<line x1="1495.5" y1="722.3" x2="1495.5" y2="856" stroke="rgba(204,204,220,0.1)" stroke-width="1"/>
<line x1="1563.5" y1="722.3" x2="1563.5" y2="856" stroke="rgba(204,204,220,0.1)" stroke-width="1"/>
<path d="M889.1,736.0 L1428.4,736.0 L1449.8,773.7 L1483.3,843.8 L1491.2,849.6 L1500.0,851.8 L1563.7,851.8" fill="none" stroke="#6cb75f" stroke-width="2" stroke-linejoin="round"/>
<path d="M889.1,852.4 L1563.7,852.4" fill="none" stroke="#f04154" stroke-width="2" stroke-linejoin="round"/>
<path d="M1488.0,850.4 L1506.0,850.4" fill="none" stroke="#5794f2" stroke-width="2" stroke-linejoin="round"/>
<path d="M1540.0,850.2 L1563.7,850.0" fill="none" stroke="#5794f2" stroke-width="2" stroke-linejoin="round"/>
<path d="M889.1,851.2 L1490.0,851.2 L1500.0,851.9 L1563.7,851.9" fill="none" stroke="#c574d6" stroke-width="2" stroke-linejoin="round"/>
<text x="839.00" y="889.00" font-size="12" fill="#6e9fff" stroke="#6e9fff" stroke-width="0.5" textLength="33.27" lengthAdjust="spacingAndGlyphs">Name</text>
<text x="1436.00" y="889.00" font-size="12" fill="#6e9fff" stroke="#6e9fff" stroke-width="0.5" textLength="33.03" lengthAdjust="spacingAndGlyphs">Last *</text>
<text x="1514.50" y="889.00" font-size="12" fill="#6e9fff" stroke="#6e9fff" stroke-width="0.5" textLength="32.52" lengthAdjust="spacingAndGlyphs">Mean</text>
<line x1="809" y1="897.1" x2="1563.7" y2="897.1" stroke="#2b2e34" stroke-width="1"/>
<line x1="809" y1="921.4" x2="1563.7" y2="921.4" stroke="#2b2e34" stroke-width="1"/>
<line x1="809" y1="944.3" x2="1563.7" y2="944.3" stroke="#2b2e34" stroke-width="1"/>
<clipPath id="c7"><rect x="800" y="860" width="780" height="99.6"/></clipPath><g clip-path="url(#c7)">
<rect x="816.7" y="906.6" width="14" height="4" rx="2" fill="#6cb75f"/>
<rect x="816.7" y="930.5" width="14" height="4" rx="2" fill="#fade2a"/>
<rect x="816.7" y="953.5" width="14" height="4" rx="2" fill="#5794f2"/>
<text x="839.00" y="913.00" font-size="12" fill="#ccccdc" stroke="#ccccdc" stroke-width="0.2" textLength="111.31" lengthAdjust="spacingAndGlyphs">Prompt Tokens/sec</text>
<text x="839.00" y="937.00" font-size="12" fill="#ccccdc" stroke="#ccccdc" stroke-width="0.2" textLength="111.31" lengthAdjust="spacingAndGlyphs">Prompt Tokens/sec</text>
<text x="839.00" y="960.00" font-size="12" fill="#ccccdc" stroke="#ccccdc" stroke-width="0.2" textLength="111.31" lengthAdjust="spacingAndGlyphs">Prompt Tokens/sec</text>
<text x="1447.50" y="913.00" font-size="12" fill="#ccccdc" stroke="#ccccdc" stroke-width="0.2" textLength="28.77" lengthAdjust="spacingAndGlyphs">0 tps</text>
<text x="1510.40" y="913.00" font-size="12" fill="#ccccdc" stroke="#ccccdc" stroke-width="0.2" textLength="43.98" lengthAdjust="spacingAndGlyphs">13.5 tps</text>
<text x="1447.50" y="937.00" font-size="12" fill="#ccccdc" stroke="#ccccdc" stroke-width="0.2" textLength="28.77" lengthAdjust="spacingAndGlyphs">0 tps</text>
<text x="1525.70" y="937.00" font-size="12" fill="#ccccdc" stroke="#ccccdc" stroke-width="0.2" textLength="28.67" lengthAdjust="spacingAndGlyphs">0 tps</text>
<text x="1424.90" y="960.00" font-size="12" fill="#ccccdc" stroke="#ccccdc" stroke-width="0.2" textLength="51.39" lengthAdjust="spacingAndGlyphs">0.108 tps</text>
<text x="1503.00" y="960.00" font-size="12" fill="#ccccdc" stroke="#ccccdc" stroke-width="0.2" textLength="51.39" lengthAdjust="spacingAndGlyphs">0.130 tps</text>
</g>
<rect x="1563.7" y="874.8" width="9.799999999999955" height="84.80000000000007" fill="#202020" stroke="#333" stroke-width="0.6"/>
<rect x="1566.2" y="877.3" width="5.399999999999864" height="37.700000000000045" rx="2.699999999999932" fill="#5a5a5a"/>
<path d="M31.68,650.99 A179.6,179.6 0 0 1 250.20,421.53 L248.33,428.28 A172.6,172.6 0 0 0 38.33,648.80 Z" fill="#6cb75f"/>
<path d="M250.20,421.53 A179.6,179.6 0 0 1 377.34,554.81 L370.51,556.36 A172.6,172.6 0 0 0 248.33,428.28 Z" fill="#fade2a"/>
<path d="M377.34,554.81 A179.6,179.6 0 0 1 372.72,650.99 L366.07,648.80 A172.6,172.6 0 0 0 370.51,556.36 Z" fill="#f04154"/>
<path d="M40.13,648.20 A170.7,170.7 0 1 1 372.30,608.88 L333.54,605.63 A131.8,131.8 0 1 0 77.07,635.98 Z" fill="#f04154"/>
<path d="M372.30,608.88 A170.7,170.7 0 0 1 364.27,648.20 L327.33,635.98 A131.8,131.8 0 0 0 333.54,605.63 Z" fill="#212226"/>
<text x="118.10" y="631.50" font-size="60" fill="#f04154" textLength="169.47" lengthAdjust="spacingAndGlyphs" stroke="#f04154" stroke-width="0.9">65.6 K</text>
<path d="M426.78,651.09 A179.6,179.6 0 0 1 473.67,464.42 L478.49,469.50 A172.6,172.6 0 0 0 433.43,648.90 Z" fill="#f04154"/>
<path d="M473.67,464.42 A179.6,179.6 0 0 1 663.71,427.83 L661.12,434.33 A172.6,172.6 0 0 0 478.49,469.50 Z" fill="#fade2a"/>
<path d="M663.71,427.83 A179.6,179.6 0 0 1 767.82,651.09 L761.17,648.90 A172.6,172.6 0 0 0 661.12,434.33 Z" fill="#6cb75f"/>
<path d="M435.23,648.30 A170.7,170.7 0 1 1 764.57,560.67 L726.45,568.42 A131.8,131.8 0 1 0 472.17,636.08 Z" fill="#6cb75f"/>
<path d="M764.57,560.67 A170.7,170.7 0 0 1 759.37,648.30 L722.43,636.08 A131.8,131.8 0 0 0 726.45,568.42 Z" fill="#212226"/>
<text x="514.10" y="635.30" font-size="64" fill="#6cb75f" textLength="162.73" lengthAdjust="spacingAndGlyphs" stroke="#6cb75f" stroke-width="0.9">86.1%</text>
<text x="18.50" y="740.20" font-size="24" fill="#ccccdc" textLength="227.74" lengthAdjust="spacingAndGlyphs">Pod 10.128.7.54:8000</text>
<rect x="18.2" y="748.1" width="635.4" height="40.6" rx="2" fill="#222226"/>
<rect x="18.2" y="748.1" width="537.5" height="40.6" rx="2" fill="#355339"/>
<rect x="553.7" y="748.1" width="2" height="40.6" fill="#6cb75f"/>
<text x="669.80" y="782.30" font-size="40" fill="#6cb75f" textLength="75.95" lengthAdjust="spacingAndGlyphs" stroke="#6cb75f" stroke-width="0.5">87.5</text>
<text x="750.90" y="782.30" font-size="26" fill="#6cb75f" textLength="19.78" lengthAdjust="spacingAndGlyphs">%</text>
<text x="18.50" y="824.70" font-size="24" fill="#ccccdc" textLength="215.96" lengthAdjust="spacingAndGlyphs">Pod 10.130.7.11:8000</text>
<rect x="18.2" y="832.7" width="690.6" height="42.1" rx="2" fill="#222226"/>
<rect x="17.9" y="832.7" width="2.2" height="42.1" fill="#f04154"/>
<text x="723.80" y="866.20" font-size="40" fill="#f04154" textLength="22.25" lengthAdjust="spacingAndGlyphs">0</text>
<text x="750.90" y="866.20" font-size="26" fill="#f04154" textLength="19.78" lengthAdjust="spacingAndGlyphs">%</text>
<text x="18.50" y="910.80" font-size="24" fill="#ccccdc" textLength="220.64" lengthAdjust="spacingAndGlyphs">Pod 10.130.7.12:8000</text>
<rect x="18.2" y="918.8" width="690.6" height="40.8" rx="2" fill="#222226"/>
<rect x="17.9" y="918.8" width="2.2" height="40.8" fill="#f04154"/>
<text x="723.80" y="952.30" font-size="40" fill="#f04154" textLength="22.25" lengthAdjust="spacingAndGlyphs">0</text>
<text x="750.90" y="952.30" font-size="26" fill="#f04154" textLength="19.78" lengthAdjust="spacingAndGlyphs">%</text>
</svg></body></html>
